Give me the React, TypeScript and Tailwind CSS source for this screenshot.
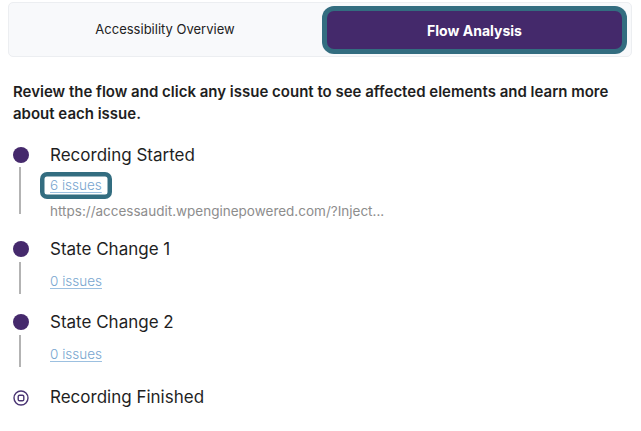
import React from "react";

const font = { fontFamily: "Inter, 'Noto Sans', sans-serif" };

function Dot() {
  return <div className="w-[16px] h-[16px] rounded-full bg-[#45296c] mt-[4px] shrink-0" />;
}

function FinishIcon() {
  return (
    <svg width="16" height="16" viewBox="0 0 16 16" fill="none" className="mt-[5px]">
      <circle cx="8" cy="8" r="7" stroke="#4a3473" strokeWidth="1.4" />
      <rect x="5.2" y="5.2" width="5.6" height="5.6" rx="1.4" stroke="#4a3473" strokeWidth="1.4" />
    </svg>
  );
}

type Step = {
  title: string;
  issues: string;
  url?: string;
  focused?: boolean;
  lineMt: string;
  lineH: string;
  issuesMt: string;
  pb: string;
};

const steps: Step[] = [
  {
    title: "Recording Started",
    issues: "6 issues",
    url: "https://accessaudit.wpenginepowered.com/?Inject...",
    focused: true,
    lineMt: "mt-[4px]",
    lineH: "h-[47px]",
    issuesMt: "mt-[8px]",
    pb: "pb-[17px]",
  },
  {
    title: "State Change 1",
    issues: "0 issues",
    lineMt: "mt-[5px]",
    lineH: "h-[32px]",
    issuesMt: "mt-[10px]",
    pb: "pb-[16px]",
  },
  {
    title: "State Change 2",
    issues: "0 issues",
    lineMt: "mt-[5px]",
    lineH: "h-[32px]",
    issuesMt: "mt-[10px]",
    pb: "pb-[18px]",
  },
];

export default function App() {
  return (
    <div className="w-[641px] h-[431px] bg-white overflow-hidden" style={font}>
      {/* Tabs */}
      <div className="ml-[8px] mt-[2px] w-[624px] h-[55px] flex rounded-[5px] border border-[#eceef1] bg-[#f8f9fb]">
        <button className="w-[312px] h-full flex items-center justify-center text-[13px] text-[#222]">
          Accessibility Overview
        </button>
        <div className="flex-1 pl-[6px] pr-[9px] pt-[8px] pb-[7px]">
          <button className="w-full h-full rounded-[7px] bg-[#44296b] ring-[5px] ring-[#336d80] flex items-center justify-center text-[14px] font-bold text-white">
            Flow Analysis
          </button>
        </div>
      </div>

      {/* Intro */}
      <p className="mt-[24px] ml-[13px] w-[612px] text-[15px] leading-[22px] font-semibold text-[#1e1e1e]">
        Review the flow and click any issue count to see affected elements and learn more about each issue.
      </p>

      {/* Timeline */}
      <div className="mt-[18px] ml-[13px]">
        {steps.map((s) => (
          <div key={s.title} className={`flex ${s.pb}`}>
            <div className="w-[37px] flex flex-col items-start">
              <Dot />
              <div className={`${s.lineMt} ${s.lineH} w-[2px] ml-[6px] bg-[#b3b3b3]`} />
            </div>
            <div className="flex flex-col">
              <div className="text-[17px] leading-[24px] text-[#1f1f1f]">{s.title}</div>
              <div className={`${s.issuesMt} h-[20px] flex items-center`}>
                <span
                  className={
                    s.focused
                      ? "inline-block shrink-0 -ml-[10px] px-[10px] py-[3.5px] rounded-[7px] ring-[4.5px] ring-inset ring-[#336d80] text-[13.5px] leading-[20px] text-[#78a6cf] underline underline-offset-2 decoration-[#9cc0e0] font-light"
                      : "text-[13.5px] leading-[20px] text-[#78a6cf] underline underline-offset-2 decoration-[#9cc0e0] font-light"
                  }
                >
                  {s.issues}
                </span>
              </div>
              {s.url && (
                <div className="mt-[7px] text-[13.5px] leading-[18px] text-[#8d8d8d]">{s.url}</div>
              )}
            </div>
          </div>
        ))}
        <div className="flex">
          <div className="w-[37px]">
            <FinishIcon />
          </div>
          <div className="text-[17px] leading-[24px] text-[#1f1f1f]">Recording Finished</div>
        </div>
      </div>
    </div>
  );
}
